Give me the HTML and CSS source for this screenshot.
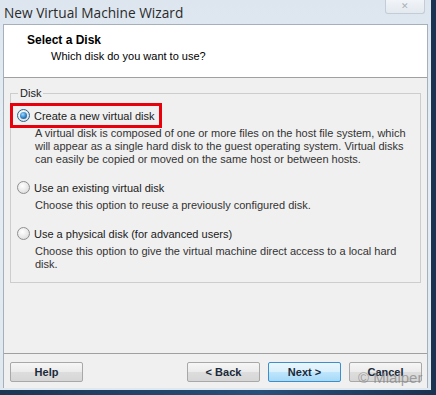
FILE: index.html
```html
<!DOCTYPE html>
<html lang="en">
<head>
    <meta charset="UTF-8">
    <title>New Virtual Machine Wizard</title>
    <link rel="stylesheet" href="styles.css">
</head>
<body>
    <div class="window">
        <div class="titlebar">
            <span class="title">New Virtual Machine Wizard</span>
            <span class="close-btn">&#x2715;</span>
        </div>
        <div class="client">
            <div class="header">
                <div class="header-title">Select a Disk</div>
                <div class="header-sub">Which disk do you want to use?</div>
            </div>
            <div class="body">
                <fieldset class="group">
                    <legend>Disk</legend>
                    <div class="option highlighted">
                        <label class="radio-row"><span class="radio checked"></span>Create a new virtual disk</label>
                    </div>
                    <p class="desc">A virtual disk is composed of one or more files on the host file system, which will appear as a single hard disk to the guest operating system. Virtual disks can easily be copied or moved on the same host or between hosts.</p>
                    <div class="option">
                        <label class="radio-row"><span class="radio"></span>Use an existing virtual disk</label>
                    </div>
                    <p class="desc">Choose this option to reuse a previously configured disk.</p>
                    <div class="option">
                        <label class="radio-row"><span class="radio"></span>Use a physical disk (for advanced users)</label>
                    </div>
                    <p class="desc">Choose this option to give the virtual machine direct access to a local hard disk.</p>
                </fieldset>
            </div>
            <div class="footer">
                <button class="btn">Help</button>
                <div class="spacer"></div>
                <button class="btn">&lt; Back</button>
                <button class="btn default">Next &gt;</button>
                <button class="btn">Cancel</button>
            </div>
        </div>
    </div>
    <div class="watermark">&copy; Mialper</div>
</body>
</html>
```
FILE: styles.css
```css
body {
    margin: 0;
    width: 436px;
    height: 395px;
    overflow: hidden;
    background: linear-gradient(90deg, #1b3553 0%, #27507a 60%, #1a3250 100%);
    font-family: "Liberation Sans", Arial, sans-serif;
    font-size: 11px;
    color: #1a1a1a;
    position: relative;
}
.window {
    width: 431px;
    height: 390px;
    box-sizing: border-box;
    padding: 0 3px 2px 3px;
    display: flex;
    flex-direction: column;
    background: linear-gradient(180deg, #dde6ef 0%, #e6edf4 40%, #dfe7ef 100%);
}
.titlebar {
    height: 24px;
    display: flex;
    justify-content: space-between;
    align-items: flex-start;
}
.title {
    font-family: "Open Sans", "Noto Sans", sans-serif;
    font-size: 13.7px;
    color: #2b2b2b;
    margin: 3px 0 0 1px;
}
.close-btn {
    width: 38px;
    height: 13px;
    margin-right: 3px;
    border: 1px solid #c4ccd6;
    border-top: none;
    border-radius: 0 0 3px 3px;
    background: linear-gradient(180deg, #f1f4f8, #e3e9ef);
    color: #a9b0b8;
    font-size: 9px;
    line-height: 12px;
    text-align: center;
}
.client {
    flex: 1;
    display: flex;
    flex-direction: column;
    background: #f0f0f0;
    border: 1px solid #a6b0ba;
    border-bottom: none;
}
.header {
    height: 53px;
    background: #fff;
    border-bottom: 1px solid #a0a0a0;
    padding-left: 23px;
    box-sizing: border-box;
    padding-top: 8px;
}
.header-title {
    font-weight: bold;
    font-size: 12px;
    line-height: 14px;
    color: #000;
}
.header-sub {
    padding-left: 24px;
    margin-top: 3px;
    font-size: 11px;
    color: #000;
}
.body {
    flex: 1;
    padding: 9px 6px 0 6px;
}
.group {
    margin: 0;
    height: 196px;
    box-sizing: border-box;
    border: 1px solid #cdcdcd;
    padding: 4px 0 0 3px;
}
.group legend {
    padding: 0 2px;
    margin-left: 4px;
    color: #1a1a1a;
}
.option {
    width: 142px;
    height: 19px;
    margin-left: -4px;
    padding-left: 4px;
    border: 3px solid transparent;
    display: flex;
    align-items: center;
}
.option.highlighted {
    border-color: #e8000b;
}
.radio-row {
    display: flex;
    align-items: center;
    gap: 4px;
    white-space: nowrap;
}
.radio {
    width: 11px;
    height: 11px;
    border-radius: 50%;
    border: 1px solid #8e8f8f;
    background: radial-gradient(circle at 40% 35%, #ffffff 0%, #e6e6e6 60%, #cfcfcf 100%);
    position: relative;
    flex-shrink: 0;
}
.radio.checked {
    border-color: #2c628b;
}
.radio.checked::after {
    content: "";
    position: absolute;
    left: 2px;
    top: 2px;
    width: 7px;
    height: 7px;
    border-radius: 50%;
    background: radial-gradient(circle at 40% 35%, #9fd9ff 0%, #2b7fc4 55%, #0d4f8c 100%);
}
.desc {
    margin: -1px 8px 0 21px;
    line-height: 13px;
    color: #333;
    padding-bottom: 9px;
}
.footer {
    height: 35px;
    box-sizing: border-box;
    border-top: 1px solid #a0a0a0;
    display: flex;
    align-items: flex-start;
    padding: 8px 5px 0 6px;
    gap: 8px;
}
.spacer {
    flex: 1;
}
.btn {
    width: 73px;
    height: 20px;
    font-family: "Liberation Sans", Arial, sans-serif;
    font-size: 11px;
    font-weight: bold;
    color: #1a2a3a;
    border: 1px solid #a8a8a8;
    border-radius: 2px;
    background: linear-gradient(180deg, #f6f6f6 0%, #ebebeb 50%, #dddddd 51%, #d6d6d6 100%);
    padding: 0;
}
.btn.default {
    border-color: #3c8fca;
    background: linear-gradient(180deg, #eaf6fd 0%, #d9f0fc 50%, #bee6fd 51%, #a7d9f5 100%);
}
.watermark {
    position: absolute;
    left: 358px;
    top: 369px;
    font-family: "Liberation Sans", sans-serif;
    font-size: 15px;
    color: rgba(130, 130, 130, 0.7);
    white-space: nowrap;
}
```
